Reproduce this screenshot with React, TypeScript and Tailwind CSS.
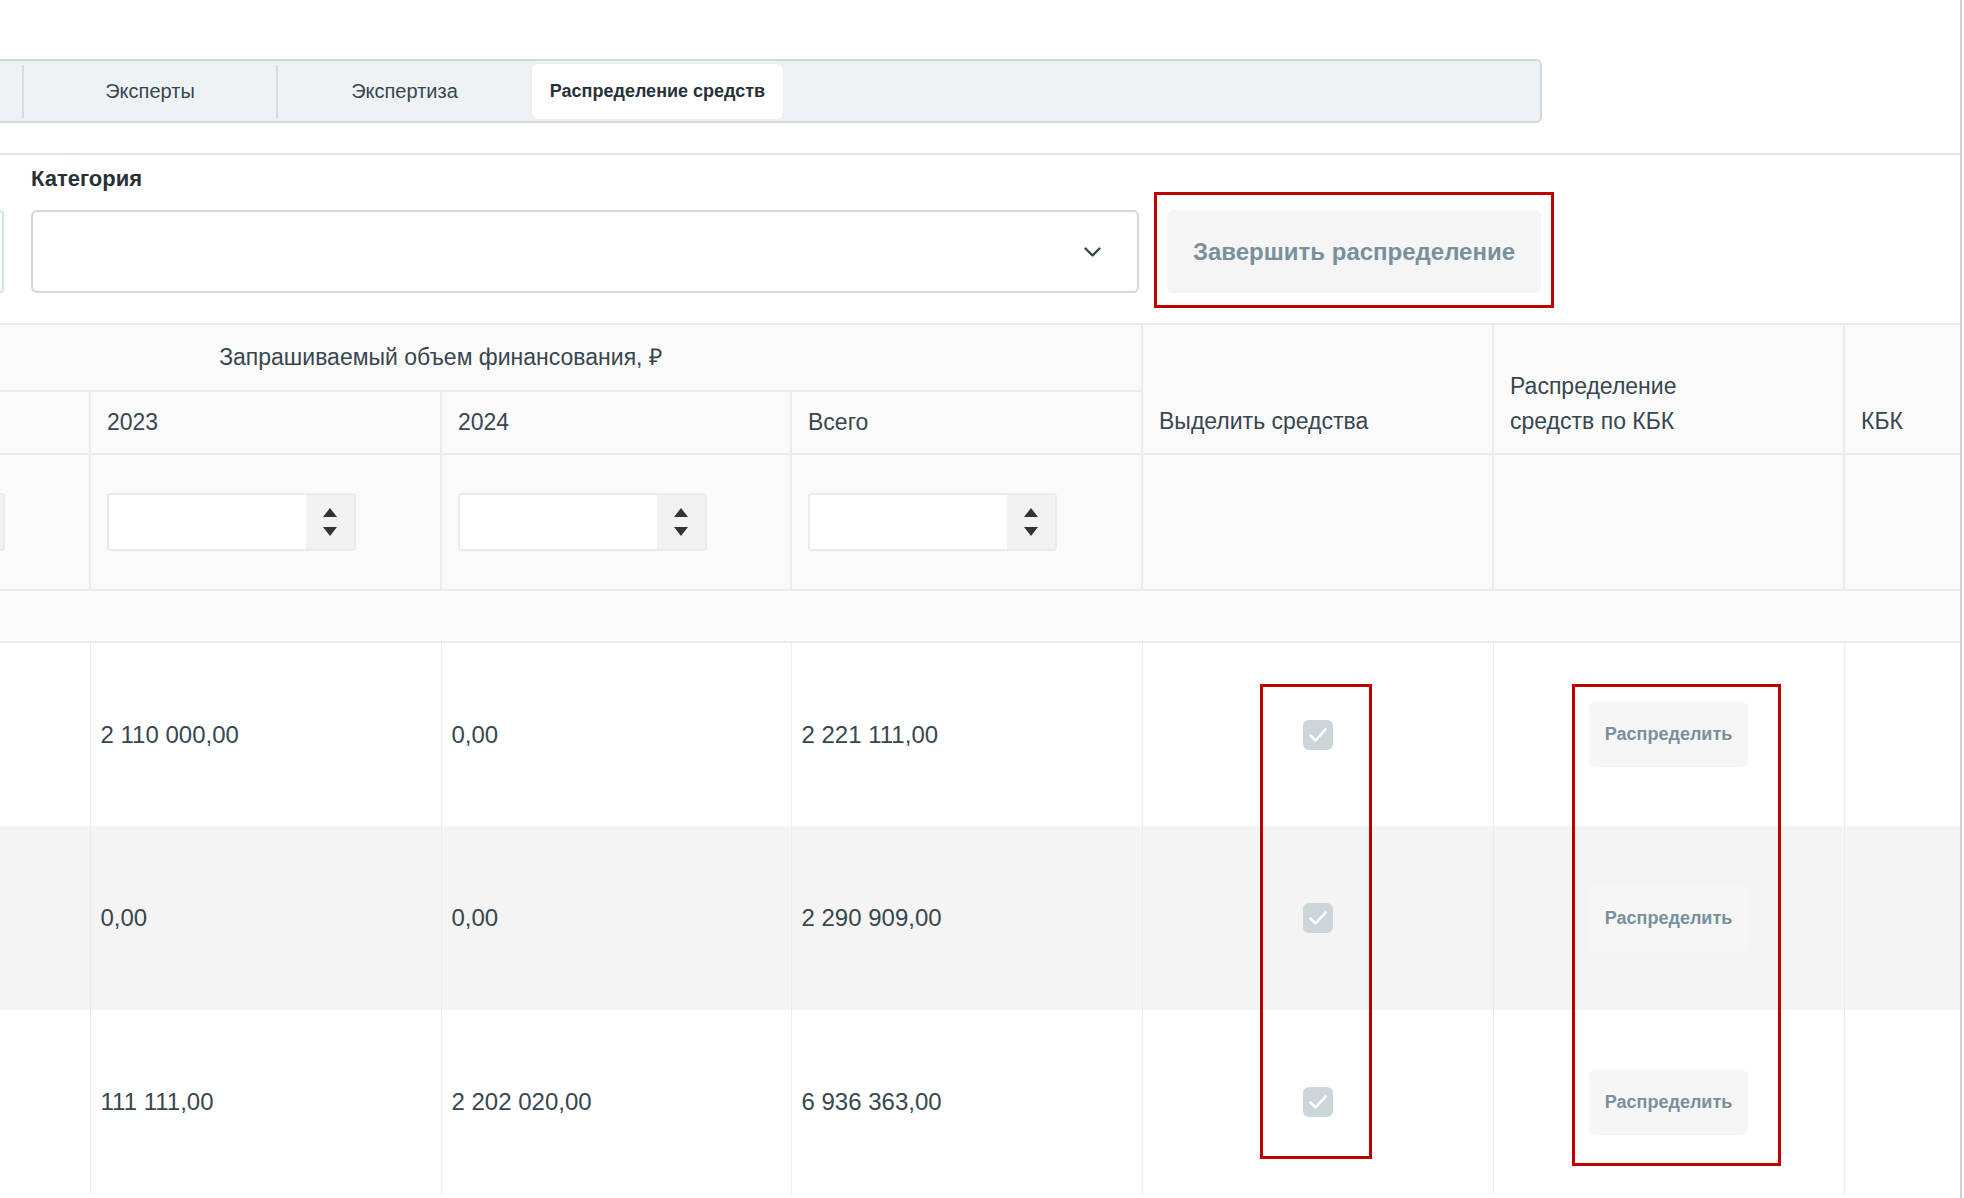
import React from "react";

const FONT = "font-['Liberation_Sans',Arial,sans-serif]";

const rows = [
  { y23: "2 110 000,00", y24: "0,00", total: "2 221 111,00", bg: "bg-white" },
  { y23: "0,00", y24: "0,00", total: "2 290 909,00", bg: "bg-[#f4f4f4]" },
  { y23: "111 111,00", y24: "2 202 020,00", total: "6 936 363,00", bg: "bg-white" },
];

function NumberField() {
  return (
    <div className="flex h-[58px] w-[249px] overflow-hidden rounded-[4px] border-2 border-[#ebebeb] bg-white">
      <input className="min-w-0 flex-1 bg-white outline-none" />
      <div className="flex w-[48px] flex-col items-center justify-center gap-[10px] bg-[#f2f2f2]">
        <svg width="14" height="9" viewBox="0 0 14 9">
          <path d="M7 0L14 9H0Z" fill="#333" />
        </svg>
        <svg width="14" height="9" viewBox="0 0 14 9">
          <path d="M0 0H14L7 9Z" fill="#333" />
        </svg>
      </div>
    </div>
  );
}

function Check() {
  return (
    <div className="mx-auto flex h-[30px] w-[30px] items-center justify-center rounded-[6px] bg-[#cbd5da]">
      <svg width="20" height="16" viewBox="0 0 20 16" fill="none">
        <path d="M2.5 8.5L7.5 13.5L17.5 2.5" stroke="white" strokeWidth="2.6" strokeLinecap="round" strokeLinejoin="round" />
      </svg>
    </div>
  );
}

export default function App() {
  const cell = "border-2 border-[#ececec] bg-[#fafafa] font-normal text-[23px] text-[#37474f]";
  const th = `${cell} text-left`;
  const td = "border-x border-[#ececec] pl-[10px] text-[24px] text-[#37474f]";

  return (
    <div className={`flex h-[1198px] w-[1964px] overflow-hidden bg-white ${FONT}`}>
      <div className="w-[1960px] shrink-0 overflow-hidden">
        {/* tabs */}
        <div className="border-b-2 border-[#dfe4e7] pb-[30px] pt-[59px]">
          <div className="ml-[-231px] flex h-[64px] w-[1773px] items-center rounded-[6px] border-2 border-[#cfd8dc] bg-[#eef2f5]">
            <div className="w-[251px]" />
            <div className="h-[53px] w-[2px] bg-[#d5dde1]" />
            <div className="flex w-[252px] justify-center text-[20px] text-[#37474f]">Эксперты</div>
            <div className="h-[53px] w-[2px] bg-[#d5dde1]" />
            <div className="flex w-[253px] justify-center text-[20px] text-[#37474f]">Экспертиза</div>
            <div className="ml-[1px] flex h-[55px] w-[251px] items-center justify-center whitespace-nowrap rounded-[6px] bg-white text-[18px] font-bold text-[#263238] shadow-[0_0_2px_rgba(0,0,0,0.08)]">
              Распределение средств
            </div>
          </div>
        </div>

        {/* filters */}
        <div className="flex items-start">
          <div className="mt-[55px] h-[83px] w-[4px] rounded-r-[6px] border-2 border-l-0 border-[#d3e4ee]" />
          <div className="ml-[27px] mt-[12px] w-[1108px]">
            <div className="h-[24px] text-[22px] font-bold leading-[24px] text-[#263238]">Категория</div>
            <div className="mt-[19px] flex h-[83px] items-center justify-end rounded-[6px] border-2 border-[#cfd8dc] bg-white pr-[36px]">
              <svg width="17" height="10" viewBox="0 0 17 10" fill="none">
                <path d="M1.5 1.5L8.5 8.5L15.5 1.5" stroke="#37474f" strokeWidth="2.4" strokeLinecap="round" strokeLinejoin="round" />
              </svg>
            </div>
          </div>
          <div className="ml-[15px] mt-[37px] border-[3px] border-[#c00000] pb-[12px] pl-[10px] pr-[10px] pt-[15px]">
            <button className="flex h-[83px] w-[374px] items-center justify-center rounded-[6px] bg-[#f5f5f5] text-[24px] font-bold text-[#78909c]">
              Завершить распределение
            </button>
          </div>
        </div>

        {/* table */}
        <div className="relative mt-[15px]">
          <table className="ml-[-262px] w-[2457px] table-fixed border-collapse">
            <colgroup>
              <col className="w-[351px]" />
              <col className="w-[351px]" />
              <col className="w-[350px]" />
              <col className="w-[351px]" />
              <col className="w-[351px]" />
              <col className="w-[351px]" />
              <col className="w-[352px]" />
            </colgroup>
            <thead>
              <tr className="h-[67px]">
                <th colSpan={4} className={`${cell} text-center`}>
                  Запрашиваемый объем финансования, ₽
                </th>
                <th rowSpan={2} className={`${th} pb-[14px] pl-[16px] align-bottom leading-[35px]`}>
                  Выделить средства
                </th>
                <th rowSpan={2} className={`${th} pb-[14px] pl-[16px] pr-[110px] align-bottom leading-[35px]`}>
                  Распределение средств по КБК
                </th>
                <th rowSpan={2} className={`${th} pb-[14px] pl-[16px] align-bottom leading-[35px]`}>
                  КБК
                </th>
              </tr>
              <tr className="h-[63px]">
                <th className={th} />
                <th className={`${th} pl-[16px]`}>2023</th>
                <th className={`${th} pl-[16px]`}>2024</th>
                <th className={`${th} pl-[16px]`}>Всего</th>
              </tr>
              <tr className="h-[136px]">
                {[0, 1, 2, 3].map((i) => (
                  <th key={i} className={`${th} pl-[16px]`}>
                    <NumberField />
                  </th>
                ))}
                <th className={th} />
                <th className={th} />
                <th className={th} />
              </tr>
            </thead>
            <tbody>
              <tr className="h-[52px]">
                <td colSpan={7} className="border-y-2 border-[#ececec] bg-[#fafafa]" />
              </tr>
              {rows.map((r, i) => (
                <tr key={i} className={`h-[184px] ${r.bg}`}>
                  <td className={td} />
                  <td className={td}>{r.y23}</td>
                  <td className={td}>{r.y24}</td>
                  <td className={td}>{r.total}</td>
                  <td className={td}>
                    <div className="pr-[10px]">
                      <Check />
                    </div>
                  </td>
                  <td className={td}>
                    <div className="flex justify-center pr-[10px]">
                      <button className="h-[65px] w-[159px] rounded-[6px] bg-[#f6f6f6] text-[18px] font-bold text-[#78909c]">
                        Распределить
                      </button>
                    </div>
                  </td>
                  <td className={td} />
                </tr>
              ))}
            </tbody>
          </table>

          {/* annotation frames */}
          <div className="pointer-events-none absolute left-[1260px] top-[361px] h-[475px] w-[112px] border-[3px] border-[#c00000]" />
          <div className="pointer-events-none absolute left-[1572px] top-[361px] h-[482px] w-[209px] border-[3px] border-[#c00000]" />
        </div>
      </div>
      <div className="h-full w-[2px] bg-[#d0d0d0]" />
    </div>
  );
}
